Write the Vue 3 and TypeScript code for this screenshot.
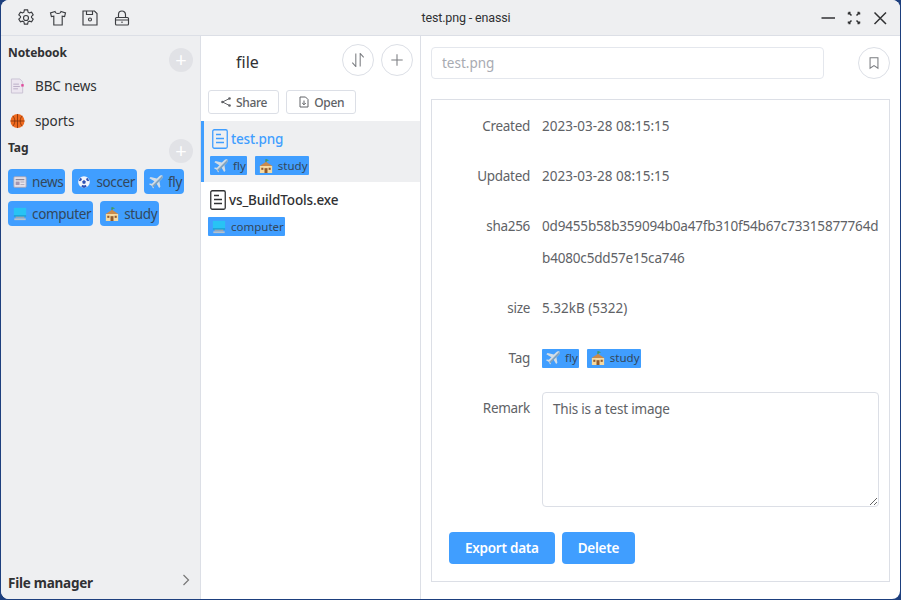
<template>
  <div class="desktop">
    <svg class="defs" aria-hidden="true">
      <symbol id="e-news" viewBox="0 0 16 16">
        <rect x="1" y="2" width="14" height="12" rx="1" fill="#e8e4ec" stroke="#a9a3b5" />
        <rect x="3" y="4.500" width="10" height="1.500" fill="#8d8799" />
        <rect x="3" y="7.500" width="4.500" height="4" fill="#a596b0" />
        <rect x="8.500" y="7.500" width="4.500" height="1" fill="#a9a3b5" />
        <rect x="8.500" y="10.500" width="4.500" height="1" fill="#a9a3b5" />
      </symbol>
      <symbol id="e-soccer" viewBox="-1 -1 18 18">
        <circle cx="8" cy="8" r="7.500" fill="#f2f4fb" />
        <path d="M8 5.500l2.400 1.800-.9 2.800h-3l-.9-2.800zM3 3l2 .6.200 1.800-2.200 1.600-1.600-.6zM13 3l-2 .6-.2 1.800 2.200 1.600 1.600-.6zM4.600 14l1-2 2.400.6 2.400-.6 1 2-3.400 1.600z" fill="#2c4fb4" />
      </symbol>
      <symbol id="e-fly" viewBox="0 0 16 16">
        <path d="M15.300.700c-1-.8-2.700-.3-3.600.6L9 4 1.800 2.300.4 3.700l5.800 3.300-2.900 3-2.400-.3-.9.900 3 1.700 1.700 3 .9-.9-.3-2.400 3-2.900 3.300 5.800 1.400-1.400L11.900 7l2.800-2.700c.9-.9 1.400-2.600.6-3.600z" fill="#d3dde6" />
        <path d="M15.300.700c.8 1 .3 2.700-.6 3.600L5 13.900 3.500 12.500l9.700-9.700c.7-.7 1.400-1.500 2.100-2.100z" fill="#7fa3c0" />
      </symbol>
      <symbol id="e-computer" viewBox="0 0 16 16">
        <rect x="1" y="1" width="14" height="10" fill="#28c3f4" />
        <rect x="1" y="9.500" width="14" height="1.500" fill="#1a9ccc" />
        <rect x="3" y="11" width="10" height="2" fill="#9aa6b2" />
        <rect x="1.500" y="13" width="13" height="2" fill="#b9c2cb" />
      </symbol>
      <symbol id="e-study" viewBox="0 0 16 16">
        <path d="M8 .300v3.500" stroke="#3f8f3f" stroke-width="1.200" />
        <path d="M8.400 .300l3.200 1-3.200 1z" fill="#3f9f3f" />
        <path d="M0 8.500l8-5.500 8 5.500z" fill="#c98a4b" />
        <rect x="1" y="8" width="14" height="8" fill="#f6d9a0" />
        <rect x="6.300" y="10.500" width="3.400" height="5.500" fill="#8f5a2e" />
        <rect x="2.600" y="10" width="2.400" height="2.400" fill="#8f5a2e" />
        <rect x="11" y="10" width="2.400" height="2.400" fill="#8f5a2e" />
      </symbol>
    </svg>

    <div class="window">
      <header class="titlebar">
        <div class="tool-icons">
          <svg class="ti" viewBox="0 0 18 18">
            <circle cx="9" cy="9" r="2.500" />
            <path d="M7.400 .9h3.200l.5 2.300 1.300.7 2.200-.8 1.600 2.800-1.700 1.500v1.200l1.700 1.500-1.600 2.800-2.200-.8-1.300.7-.5 2.300H7.400l-.5-2.300-1.300-.7-2.200.8-1.600-2.800 1.700-1.500V7.400L1.800 5.900l1.600-2.800 2.200.8 1.300-.7z" />
          </svg>
          <svg class="ti" viewBox="0 0 18 18">
            <path d="M6 2.500 1.500 4l.9 3.600 2.400-.5V16h8.400V7.100l2.400.5.9-3.600L12 2.500c-.5 2.700-5.500 2.700-6 0z" />
          </svg>
          <svg class="ti" viewBox="0 0 18 18">
            <path d="M2 2h11.500L16 4.500V16H2z" />
            <path d="M5.500 2v3.500h6V2" />
            <circle cx="9" cy="10.500" r="1.500" />
          </svg>
          <svg class="ti" viewBox="0 0 18 18">
            <rect x="2.500" y="8.500" width="13" height="7.500" rx="1" />
            <path d="M5.500 8.500V5.500a3.500 3.500 0 0 1 7 0v3M2.500 11h13" />
            <path d="M9 12.500v1.500" />
          </svg>
        </div>
        <div class="title">test.png - enassi</div>
        <div class="win-icons">
          <svg class="wi" viewBox="0 0 18 18"><path d="M2.500 9h13.500" /></svg>
          <svg class="wi" viewBox="0 0 18 18">
            <path d="M3.500 3.500l3 3M14.500 3.500l-3 3M3.500 14.500l3-3M14.500 14.500l-3-3M3.500 3.500h2M3.500 3.500v2M14.500 3.500h-2M14.500 3.500v2M3.500 14.500h2M3.500 14.500v-2M14.500 14.500h-2M14.500 14.500v-2" />
          </svg>
          <svg class="wi" viewBox="0 0 18 18"><path d="M3.500 3.500l11.500 11.500M15 3.500 3.500 15" /></svg>
        </div>
      </header>

      <div class="body">
        <aside class="sidebar">
          <div class="side-head">
            <span class="side-title">Notebook</span>
            <span class="add-dot">+</span>
          </div>
          <div class="notebook">
            <svg class="nb-icon" viewBox="0 0 16 16">
              <path d="M1.500 .5h9l3 3v12h-12z" fill="#ece6f0" stroke="#c9c1d2" />
              <path d="M3.500 6h6M3.500 8.500h7M3.500 11h5" stroke="#b7abc4" />
              <rect x="12" y="6" width="2.600" height="2.600" fill="#e0489a" />
            </svg>
            <span>BBC news</span>
          </div>
          <div class="notebook">
            <svg class="nb-icon" viewBox="0 0 16 16">
              <circle cx="8" cy="8" r="7.500" fill="#ef6a1f" />
              <path d="M.5 8h15M8 .5v15M3 2.500c2.800 3 2.800 8 0 11M13 2.500c-2.800 3-2.800 8 0 11" fill="none" stroke="#7a2f0a" stroke-width=".8" />
            </svg>
            <span>sports</span>
          </div>
          <div class="side-head tag-head">
            <span class="side-title">Tag</span>
            <span class="add-dot">+</span>
          </div>
          <div class="side-tags">
            <span v-for="t in sideTags" :key="t.name" class="side-tag">
              <svg class="tag-icon"><use :href="'#e-' + t.name" /></svg>{{ t.name }}
            </span>
          </div>
          <div class="side-foot">
            <span>File manager</span>
            <svg class="chev" viewBox="0 0 10 12"><path d="M2.500 1l5 5-5 5" /></svg>
          </div>
        </aside>

        <section class="files">
          <div class="files-head">
            <span class="files-title">file</span>
            <button class="round">
              <svg viewBox="0 0 16 16"><path d="M5.500 .5v15L1.500 11M10.500 15.500V.5l4 4.500" /></svg>
            </button>
            <button class="round">
              <svg viewBox="0 0 16 16"><path d="M8 1.500v13M1.500 8h13" /></svg>
            </button>
          </div>
          <div class="files-actions">
            <button class="act">
              <svg viewBox="0 0 12 12">
                <circle cx="9.500" cy="2.500" r="1.300" fill="#606266" />
                <circle cx="2.500" cy="6" r="1.300" fill="#606266" />
                <circle cx="9.500" cy="9.500" r="1.300" fill="#606266" />
                <path d="M9.500 2.500 2.500 6l7 3.500" fill="none" stroke="#606266" />
              </svg>
              Share
            </button>
            <button class="act">
              <svg viewBox="0 0 12 12">
                <path d="M2 1h5.500L10 3.500V11H2z" fill="none" stroke="#606266" />
                <path d="M6 4.500v4M4.200 7 6 8.800 7.800 7" fill="none" stroke="#606266" />
              </svg>
              Open
            </button>
          </div>
          <div v-for="f in files" :key="f.name" :class="['file', { active: f.active }]">
            <div class="file-name">
              <svg class="file-icon" viewBox="0 0 16 20">
                <rect x=".75" y=".75" width="14.500" height="18.500" rx="1.500" />
                <path d="M4 5.500h5M4 9.500h8M4 13.500h8" />
              </svg>
              <span>{{ f.name }}</span>
            </div>
            <div class="file-tags">
              <span v-for="t in f.tags" :key="t" class="tag">
                <svg class="tag-icon"><use :href="'#e-' + t" /></svg>{{ t }}
              </span>
            </div>
          </div>
        </section>

        <main class="detail">
          <div class="detail-head">
            <input class="name-input" value="test.png" disabled />
            <button class="round">
              <svg viewBox="0 0 16 16"><path d="M3.500 2h9v12L8 11l-4.500 3z" /></svg>
            </button>
          </div>
          <div class="card">
            <div class="row"><label>Created</label><div class="val">2023-03-28 08:15:15</div></div>
            <div class="row"><label>Updated</label><div class="val">2023-03-28 08:15:15</div></div>
            <div class="row"><label>sha256</label><div class="val hash">0d9455b58b359094b0a47fb310f54b67c73315877764db4080c5dd57e15ca746</div></div>
            <div class="row"><label>size</label><div class="val">5.32kB (5322)</div></div>
            <div class="row">
              <label>Tag</label>
              <div class="val detail-tags">
                <span v-for="t in ['fly', 'study']" :key="t" class="tag">
                  <svg class="tag-icon"><use :href="'#e-' + t" /></svg>{{ t }}
                </span>
              </div>
            </div>
            <div class="row remark">
              <label>Remark</label>
              <textarea class="val" spellcheck="false">This is a test image</textarea>
            </div>
            <div class="btns">
              <button class="primary">Export data</button>
              <button class="primary">Delete</button>
            </div>
          </div>
        </main>
      </div>
    </div>
  </div>
</template>

<script setup lang="ts">
interface FileItem {
  name: string;
  tags: string[];
  active: boolean;
}

const sideTags = [
  { name: 'news' },
  { name: 'soccer' },
  { name: 'fly' },
  { name: 'computer' },
  { name: 'study' }
];

const files: FileItem[] = [
  { name: 'test.png', tags: ['fly', 'study'], active: true },
  { name: 'vs_BuildTools.exe', tags: ['computer'], active: false }
];
</script>

<style>
html,
body {
  margin: 0;
  height: 100%;
  overflow: hidden;
}
</style>

<style scoped>
.desktop {
  width: 901px;
  height: 600px;
  background: #1d3f7e;
  font-family: "Noto Sans", "Open Sans", sans-serif;
  color: #303133;
  box-sizing: border-box;
  padding: 0 1px 1px 1px;
}

.defs {
  position: absolute;
  width: 0;
  height: 0;
}

.window {
  height: 100%;
  background: #fff;
  border-radius: 8px;
  overflow: hidden;
  display: flex;
  flex-direction: column;
}

.titlebar {
  flex: none;
  height: 36px;
  box-sizing: border-box;
  background: #eeeff1;
  border-bottom: 1px solid #dcdfe6;
  display: flex;
  align-items: center;
  padding: 0 11px 0 16px;
}

.tool-icons {
  width: 160px;
  display: flex;
  gap: 14px;
}

.ti {
  width: 18px;
  height: 18px;
  fill: none;
  stroke: #3c3e42;
  stroke-width: 1.150;
}

.title {
  flex: 1;
  text-align: center;
  font-family: Roboto, sans-serif;
  font-size: 12.500px;
  letter-spacing: -0.15px;
  color: #303133;
}

.win-icons {
  width: 134px;
  display: flex;
  justify-content: flex-end;
  gap: 8px;
}

.wi {
  width: 18px;
  height: 18px;
  fill: none;
  stroke: #303133;
  stroke-width: 1.500;
}

.body {
  flex: 1;
  min-height: 0;
  display: flex;
}

.sidebar {
  flex: none;
  width: 200px;
  box-sizing: border-box;
  background: #eeeff1;
  border-right: 1px solid #dcdfe6;
  padding: 8px 7px 0 7px;
  display: flex;
  flex-direction: column;
}

.side-head {
  display: flex;
  justify-content: space-between;
  height: 24px;
}

.tag-head {
  margin-top: -3px;
}

.side-title {
  font-size: 12px;
  font-weight: 700;
  line-height: 18px;
  letter-spacing: -0.1px;
}

.tag-head .side-title {
  line-height: 26px;
}

.add-dot {
  width: 24px;
  height: 24px;
  margin-top: 4px;
  border-radius: 50%;
  background: #e1e2e6;
  color: #fff;
  font-size: 20px;
  line-height: 23px;
  text-align: center;
}

.notebook {
  height: 35px;
  display: flex;
  align-items: center;
  gap: 10px;
  padding-left: 2px;
  font-size: 13.500px;
  letter-spacing: -0.1px;
}

.nb-icon {
  width: 15px;
  height: 16px;
}

.side-tags {
  margin-top: 10px;
  display: flex;
  flex-wrap: wrap;
  gap: 7px;
}

.side-tag {
  height: 25px;
  background: #409eff;
  border-radius: 4px;
  padding: 0 2px 0 5px;
  display: flex;
  align-items: center;
  font-size: 13.500px;
  letter-spacing: -0.35px;
  color: #33475b;
}

.tag-icon {
  width: 14px;
  height: 14px;
  margin-right: 5px;
}

.side-foot {
  margin-top: auto;
  height: 33px;
  display: flex;
  justify-content: space-between;
  align-items: center;
  font-size: 13.500px;
  font-weight: 700;
  letter-spacing: -0.25px;
}

.chev {
  width: 10px;
  height: 12px;
  margin-right: 2px;
  margin-bottom: 6px;
  fill: none;
  stroke: #777;
  stroke-width: 1.200;
}

.files {
  flex: none;
  width: 220px;
  box-sizing: border-box;
  border-right: 1px solid #dcdfe6;
}

.files-head {
  height: 54px;
  box-sizing: border-box;
  padding: 8px 7px 0 35px;
  display: flex;
  align-items: flex-start;
  gap: 7px;
}

.files-title {
  flex: 1;
  font-size: 16px;
  line-height: 36px;
}

.round {
  flex: none;
  width: 32px;
  height: 32px;
  padding: 0;
  border: 1px solid #dcdfe6;
  border-radius: 50%;
  background: #fff;
  display: flex;
  align-items: center;
  justify-content: center;
}

.round svg {
  width: 14px;
  height: 14px;
  fill: none;
  stroke: #7a7c80;
  stroke-width: 1.200;
}

.files-actions {
  display: flex;
  gap: 7px;
  padding-left: 7px;
  height: 31px;
}

.act {
  height: 24px;
  padding: 0 11px;
  border: 1px solid #dcdfe6;
  border-radius: 3px;
  background: #fff;
  color: #606266;
  font: 500 12px "Noto Sans", sans-serif;
  letter-spacing: -0.3px;
  display: flex;
  align-items: center;
  gap: 4px;
}

.act svg {
  width: 12px;
  height: 12px;
}

.file {
  height: 61px;
  padding: 8px 0 0 7px;
  box-sizing: border-box;
}

.file.active {
  background: #eeeff1;
  box-shadow: inset 3px 0 0 #409eff;
  padding-left: 9px;
}

.file-name {
  display: flex;
  align-items: center;
  gap: 3px;
  height: 20px;
  font-size: 13.500px;
  font-weight: 500;
  letter-spacing: -0.15px;
  padding-left: 2px;
}

.file.active .file-name {
  color: #409eff;
}

.file-icon {
  width: 16px;
  height: 20px;
  fill: none;
  stroke: currentColor;
  stroke-width: 1.300;
}

.file-tags {
  margin-top: 7px;
  display: flex;
  gap: 8px;
}

.tag {
  height: 19px;
  background: #409eff;
  padding: 0 1px 0 4px;
  display: inline-flex;
  align-items: center;
  font-size: 11.500px;
  color: #33475b;
  border-radius: 1px;
}

.tag .tag-icon {
  width: 14px;
  height: 14px;
  margin-right: 5px;
}

.detail {
  flex: 1;
  min-width: 0;
  padding: 11px 10px 17px 10px;
  display: flex;
  flex-direction: column;
}

.detail-head {
  height: 52px;
  flex: none;
  display: flex;
  gap: 34px;
}

.name-input {
  width: 393px;
  height: 32px;
  box-sizing: border-box;
  border: 1px solid #e4e7ed;
  border-radius: 4px;
  background: #fff;
  padding: 0 10px;
  font: 13.500px "Noto Sans", sans-serif;
  color: #a8abb2;
}

.card {
  flex: 1;
  border: 1px solid #dcdfe6;
  padding: 10px 10px 0 17px;
}

.row {
  display: flex;
  margin-bottom: 18px;
  line-height: 32px;
  font-size: 13.500px;
}

.row label {
  width: 81px;
  flex: none;
  padding-right: 12px;
  text-align: right;
  color: #606266;
  letter-spacing: -0.3px;
}

.val {
  color: #606266;
  flex: 1;
  min-width: 0;
}

.hash {
  word-break: break-all;
  letter-spacing: -0.17px;
}

.detail-tags {
  display: flex;
  align-items: center;
  gap: 8px;
}

textarea.val {
  height: 115px;
  box-sizing: border-box;
  border: 1px solid #dcdfe6;
  border-radius: 4px;
  padding: 5px 10px;
  font: 13.500px/22px "Noto Sans", sans-serif;
  letter-spacing: -0.2px;
  outline: none;
}

.btns {
  display: flex;
  gap: 7px;
  margin-top: 25px;
}

.primary {
  height: 32px;
  padding: 0 16px;
  border: none;
  border-radius: 4px;
  background: #409eff;
  color: #fff;
  font: 600 13.500px "Noto Sans", sans-serif;
  letter-spacing: -0.25px;
}
</style>
